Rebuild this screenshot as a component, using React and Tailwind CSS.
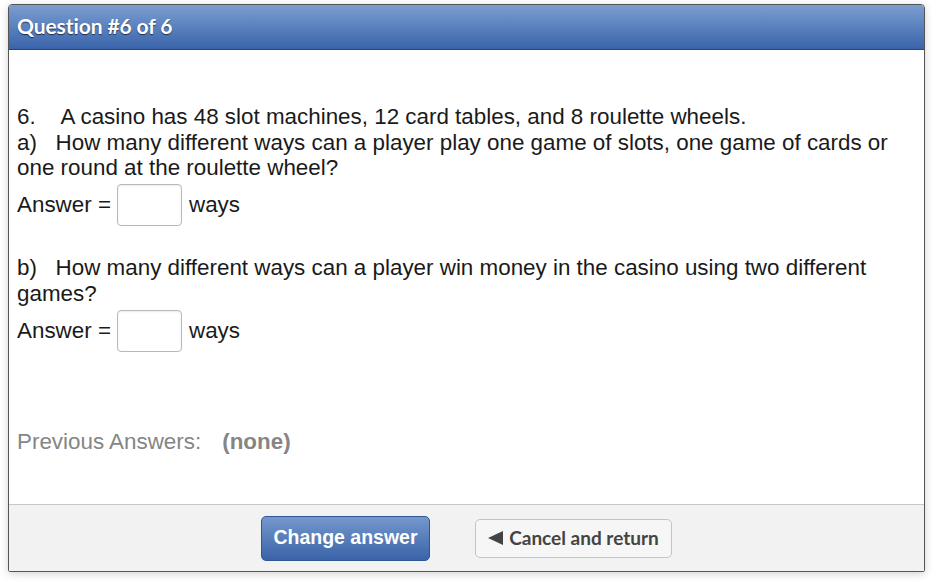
import React from "react";

function AnswerRow({ mt }) {
  return (
    <div className={`flex items-center h-[42px] ${mt}`}>
      <span>Answer =</span>
      <span className="inline-block w-[65px] h-[42px] ml-[6px] rounded-[4px] border border-[#b8b8b8] bg-white shadow-[inset_0_1px_2px_rgba(0,0,0,0.08)]"></span>
      <span className="ml-[7px]">ways</span>
    </div>
  );
}

export default function App() {
  return (
    <div className="w-[934px] h-[584px] bg-white pt-[4px] pl-[8px]">
      <div className="w-[917px] h-[568px] border border-[#555] rounded-t-[4px] rounded-b-[2px] shadow-[0_2px_8px_rgba(0,0,0,0.18)] overflow-hidden flex flex-col">
        <div className="h-[45px] shrink-0 bg-gradient-to-b from-[#7c9dd0] to-[#3a64aa] border-b border-[#1f4785] flex items-center pl-[8px] pb-[2px]">
          <span
            className="text-white text-[21px] font-bold tracking-[-0.1px] [text-shadow:0_1px_1px_rgba(0,0,0,0.6)]"
            style={{ fontFamily: "Lato, 'Open Sans', sans-serif" }}
          >
            Question #6 of 6
          </span>
        </div>
        <div
          className="h-[454px] shrink-0 bg-white pl-[8px] pt-[54px] text-[22.4px] leading-[25.5px] text-[#1a1a1a]"
          style={{ fontFamily: "'Liberation Sans', Arial, sans-serif" }}
        >
          <div className="whitespace-nowrap">6.&nbsp;&nbsp;&nbsp;&nbsp;A casino has 48 slot machines, 12 card tables, and 8 roulette wheels.</div>
          <div className="whitespace-nowrap">a)&nbsp;&nbsp;&nbsp;How many different ways can a player play one game of slots, one game of cards or</div>
          <div className="whitespace-nowrap">one round at the roulette wheel?</div>
          <AnswerRow mt="mt-[3.5px]" />
          <div className="mt-[29px] whitespace-nowrap">b)&nbsp;&nbsp;&nbsp;How many different ways can a player win money in the casino using two different</div>
          <div>games?</div>
          <AnswerRow mt="mt-[4px]" />
          <div className="mt-[77px] text-[#858585] flex">
            <span>Previous Answers:</span>
            <span className="ml-[21px] font-bold">(none)</span>
          </div>
        </div>
        <div className="flex-1 bg-[#f2f2f2] border-t border-[#c8c8c8] flex items-center justify-center gap-[45px]">
          <button
            className="w-[169px] h-[45px] rounded-[5px] border border-[#2f5594] bg-gradient-to-b from-[#7598cc] to-[#3a63a8] text-white text-[19.5px] font-bold"
            style={{ fontFamily: "'Liberation Sans', Arial, sans-serif" }}
          >
            Change answer
          </button>
          <button
            className="w-[197px] h-[39px] rounded-[5px] border border-[#c4c4c4] bg-[#f6f6f6] text-[#444] text-[19px] font-bold flex items-center justify-center gap-[6px]"
            style={{ fontFamily: "Lato, 'Open Sans', sans-serif" }}
          >
            <svg width="15" height="14" viewBox="0 0 15 14" className="shrink-0">
              <path d="M0 7 L15 0 L15 14 Z" fill="#444" />
            </svg>
            <span>Cancel and return</span>
          </button>
        </div>
      </div>
    </div>
  );
}
